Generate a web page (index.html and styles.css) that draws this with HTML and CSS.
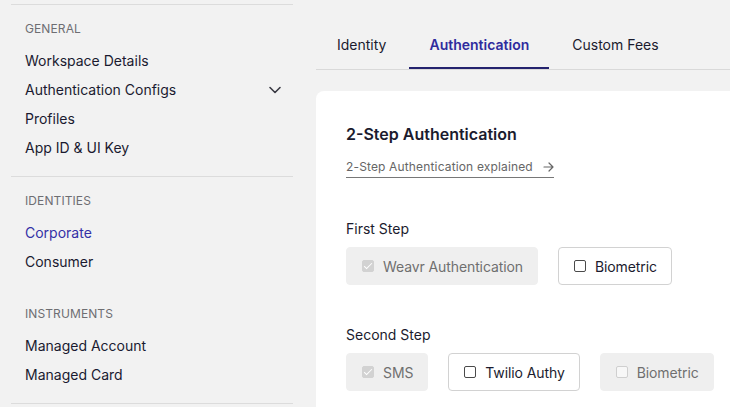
FILE: index.html
```html
<!DOCTYPE html>
<html>
<head>
<meta charset="utf-8">
<link rel="stylesheet" href="styles.css">
</head>
<body>
<div class="page">
  <aside class="sidebar">
    <section class="section">
      <div class="group">
        <div class="group-label">GENERAL</div>
        <div class="item">Workspace Details</div>
        <div class="item item-expand">Authentication Configs
          <svg class="chevron" width="14" height="14" viewBox="0 0 14 14"><path d="M2 4.5 L7 9.5 L12 4.5" fill="none" stroke="#3a3a44" stroke-width="1.6" stroke-linecap="round" stroke-linejoin="round"/></svg>
        </div>
        <div class="item">Profiles</div>
        <div class="item">App ID &amp; UI Key</div>
      </div>
    </section>
    <section class="section">
      <div class="group">
        <div class="group-label">IDENTITIES</div>
        <div class="item active">Corporate</div>
        <div class="item">Consumer</div>
      </div>
      <div class="group">
        <div class="group-label">INSTRUMENTS</div>
        <div class="item">Managed Account</div>
        <div class="item">Managed Card</div>
      </div>
    </section>
    <div class="divider"></div>
  </aside>
  <main class="main">
    <nav class="tabs">
      <div class="tab">Identity</div>
      <div class="tab tab-active">Authentication</div>
      <div class="tab">Custom Fees</div>
    </nav>
    <div class="card">
      <h2 class="title">2-Step Authentication</h2>
      <a class="link">2-Step Authentication explained
        <svg class="arrow" width="11" height="10" viewBox="0 0 11 10"><path d="M1 5 H10 M6 1 L10 5 L6 9" fill="none" stroke="#666" stroke-width="1.2" stroke-linecap="round" stroke-linejoin="round"/></svg>
      </a>
      <div class="step">
        <div class="step-label">First Step</div>
        <div class="options">
          <div class="option disabled"><span class="box checked"></span>Weavr Authentication</div>
          <div class="option"><span class="box"></span>Biometric</div>
        </div>
      </div>
      <div class="step">
        <div class="step-label">Second Step</div>
        <div class="options">
          <div class="option disabled"><span class="box checked"></span>SMS</div>
          <div class="option"><span class="box"></span>Twilio Authy</div>
          <div class="option disabled"><span class="box"></span>Biometric</div>
        </div>
      </div>
    </div>
  </main>
</div>
</body>
</html>
```

FILE: styles.css
```css
* { box-sizing: border-box; }
html, body {
  margin: 0;
  padding: 0;
  background: #f2f2f2;
  font-family: Inter, "Liberation Sans", sans-serif;
  color: #1b1b2e;
  overflow: hidden;
  height: 407px;
}
.page {
  display: flex;
  align-items: flex-start;
  height: 407px;
  overflow: hidden;
}
.sidebar {
  width: 282px;
  margin-left: 11px;
  margin-top: 4px;
  flex-shrink: 0;
}
.section {
  border-top: 1px solid #dcdcdc;
  padding: 16px 0 14px;
}
.divider {
  border-top: 1px solid #dcdcdc;
}
.group + .group {
  margin-top: 30px;
}
.group-label {
  font-size: 12px;
  line-height: 16px;
  color: #6e6e72;
  padding-left: 14px;
  margin-bottom: 9px;
  letter-spacing: 0.1px;
}
.item {
  font-size: 14px;
  line-height: 29px;
  padding: 0 11px 0 14px;
  color: #1a1a30;
  display: flex;
  align-items: center;
  justify-content: space-between;
}
.item.active {
  color: #3430a6;
}
.chevron {
  display: block;
}
.main {
  flex: 1;
  margin-left: 23px;
  padding-top: 21px;
  min-width: 0;
}
.tabs {
  display: flex;
  gap: 3px;
  padding-left: 1px;
  border-bottom: 1px solid #d9d9d9;
  height: 49px;
}
.tab {
  font-size: 14px;
  padding: 0 20px;
  line-height: 48px;
  color: #1b1b2e;
}
.tab-active {
  color: #2f2b9e;
  font-weight: 600;
  border-bottom: 2px solid #24236e;
}
.card {
  background: #fff;
  border-radius: 8px 0 0 0;
  margin-top: 21px;
  padding: 31px 0 0 30px;
  height: 316px;
  overflow: hidden;
}
.title {
  margin: 0;
  font-size: 16px;
  line-height: 24px;
  font-weight: 600;
  color: #1b1b2e;
}
.link {
  display: inline-flex;
  align-items: center;
  gap: 10px;
  margin-top: 12px;
  font-size: 12px;
  line-height: 17px;
  letter-spacing: 0.15px;
  color: #666;
  border-bottom: 1px solid #777;
  padding-bottom: 2px;
}
.arrow { display: block; }
.step {
  margin-top: 41px;
}
.step + .step {
  margin-top: 40px;
}
.step-label {
  font-size: 14px;
  line-height: 20px;
  color: #1b1b2e;
  margin-bottom: 8px;
}
.options {
  display: flex;
  gap: 20px;
}
.option {
  height: 38px;
  display: flex;
  align-items: center;
  padding: 0 14px 0 15px;
  font-size: 14px;
  letter-spacing: -0.1px;
  color: #1b1b2e;
  background: #fff;
  border: 1px solid #d2d2d2;
  border-radius: 4px;
}
.option.disabled {
  background: #efefef;
  border-color: #efefef;
  color: #6f6f6f;
}
.box {
  width: 12px;
  height: 12px;
  border: 1px solid #4a4a4a;
  border-radius: 2px;
  margin-right: 9px;
  background: #fff;
  flex-shrink: 0;
  position: relative;
}
.option.disabled .box {
  border-color: #cfcfcf;
  background: #f7f7f7;
}
.option.disabled .box.checked {
  background: #d2d2d2;
  border-color: #d2d2d2;
}
.box.checked::after {
  content: "";
  position: absolute;
  left: 3px;
  top: 0px;
  width: 3px;
  height: 7px;
  border: solid #fff;
  border-width: 0 1.6px 1.6px 0;
  transform: rotate(45deg);
}
```
